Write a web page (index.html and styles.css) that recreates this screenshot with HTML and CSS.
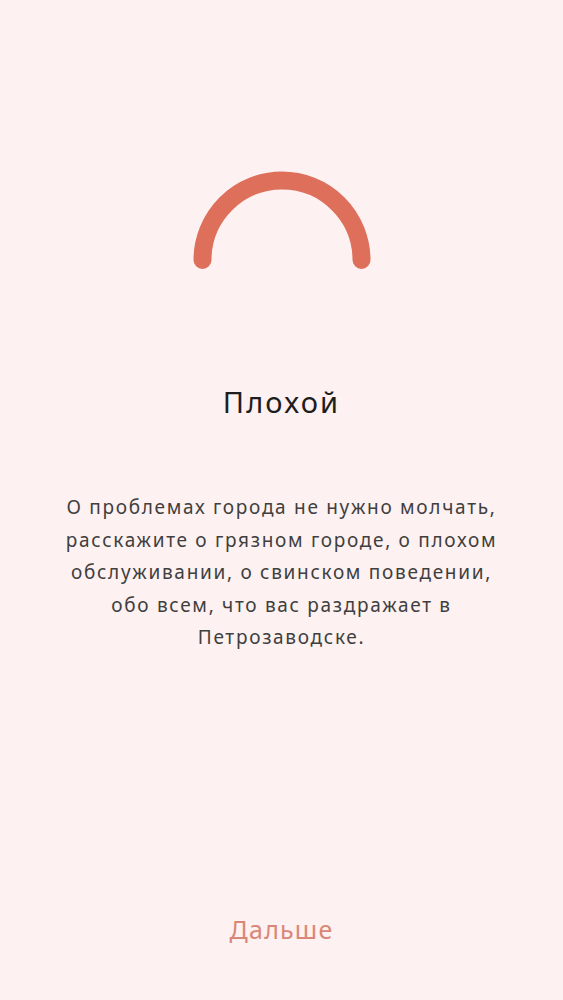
FILE: index.html
```html
<!DOCTYPE html>
<html lang="ru">
<head>
<meta charset="utf-8">
<link rel="stylesheet" href="styles.css">
</head>
<body>
<main class="screen">
  <div class="gauge">
    <svg width="180" height="100" viewBox="0 0 180 100">
      <path d="M10.5 89 A79.5 79.5 0 0 1 169.5 89" fill="none" stroke="#dd6f5b" stroke-width="18" stroke-linecap="round"/>
    </svg>
  </div>
  <h1 class="title">Плохой</h1>
  <p class="text">О проблемах города не нужно молчать, расскажите о грязном городе, о плохом обслуживании, о свинском поведении, обо всем, что вас раздражает в Петрозаводске.</p>
  <div class="spacer"></div>
  <button class="next">Дальше</button>
</main>
</body>
</html>
```

FILE: styles.css
```css
html, body {
  margin: 0;
  padding: 0;
  background: #fdf1f1;
}
.screen {
  height: 1000px;
  display: flex;
  flex-direction: column;
  align-items: center;
  font-family: "Noto Sans", sans-serif;
}
.gauge {
  margin-top: 171px;
  height: 100px;
}
.gauge svg {
  display: block;
}
.title {
  margin: 113px 0 0;
  font-size: 29px;
  font-weight: 400;
  letter-spacing: 2.2px;
  color: #1e1e1e;
  line-height: 36px;
}
.text {
  margin: 71px 0 0;
  width: 456px;
  text-align: center;
  font-size: 19px;
  letter-spacing: 1.7px;
  line-height: 32.5px;
  color: #3f3f3f;
}
.spacer {
  flex: 1;
}
.next {
  margin-bottom: 54px;
  background: none;
  border: none;
  padding: 0;
  font-family: inherit;
  font-size: 25px;
  letter-spacing: 1.2px;
  color: #d98776;
}
```
